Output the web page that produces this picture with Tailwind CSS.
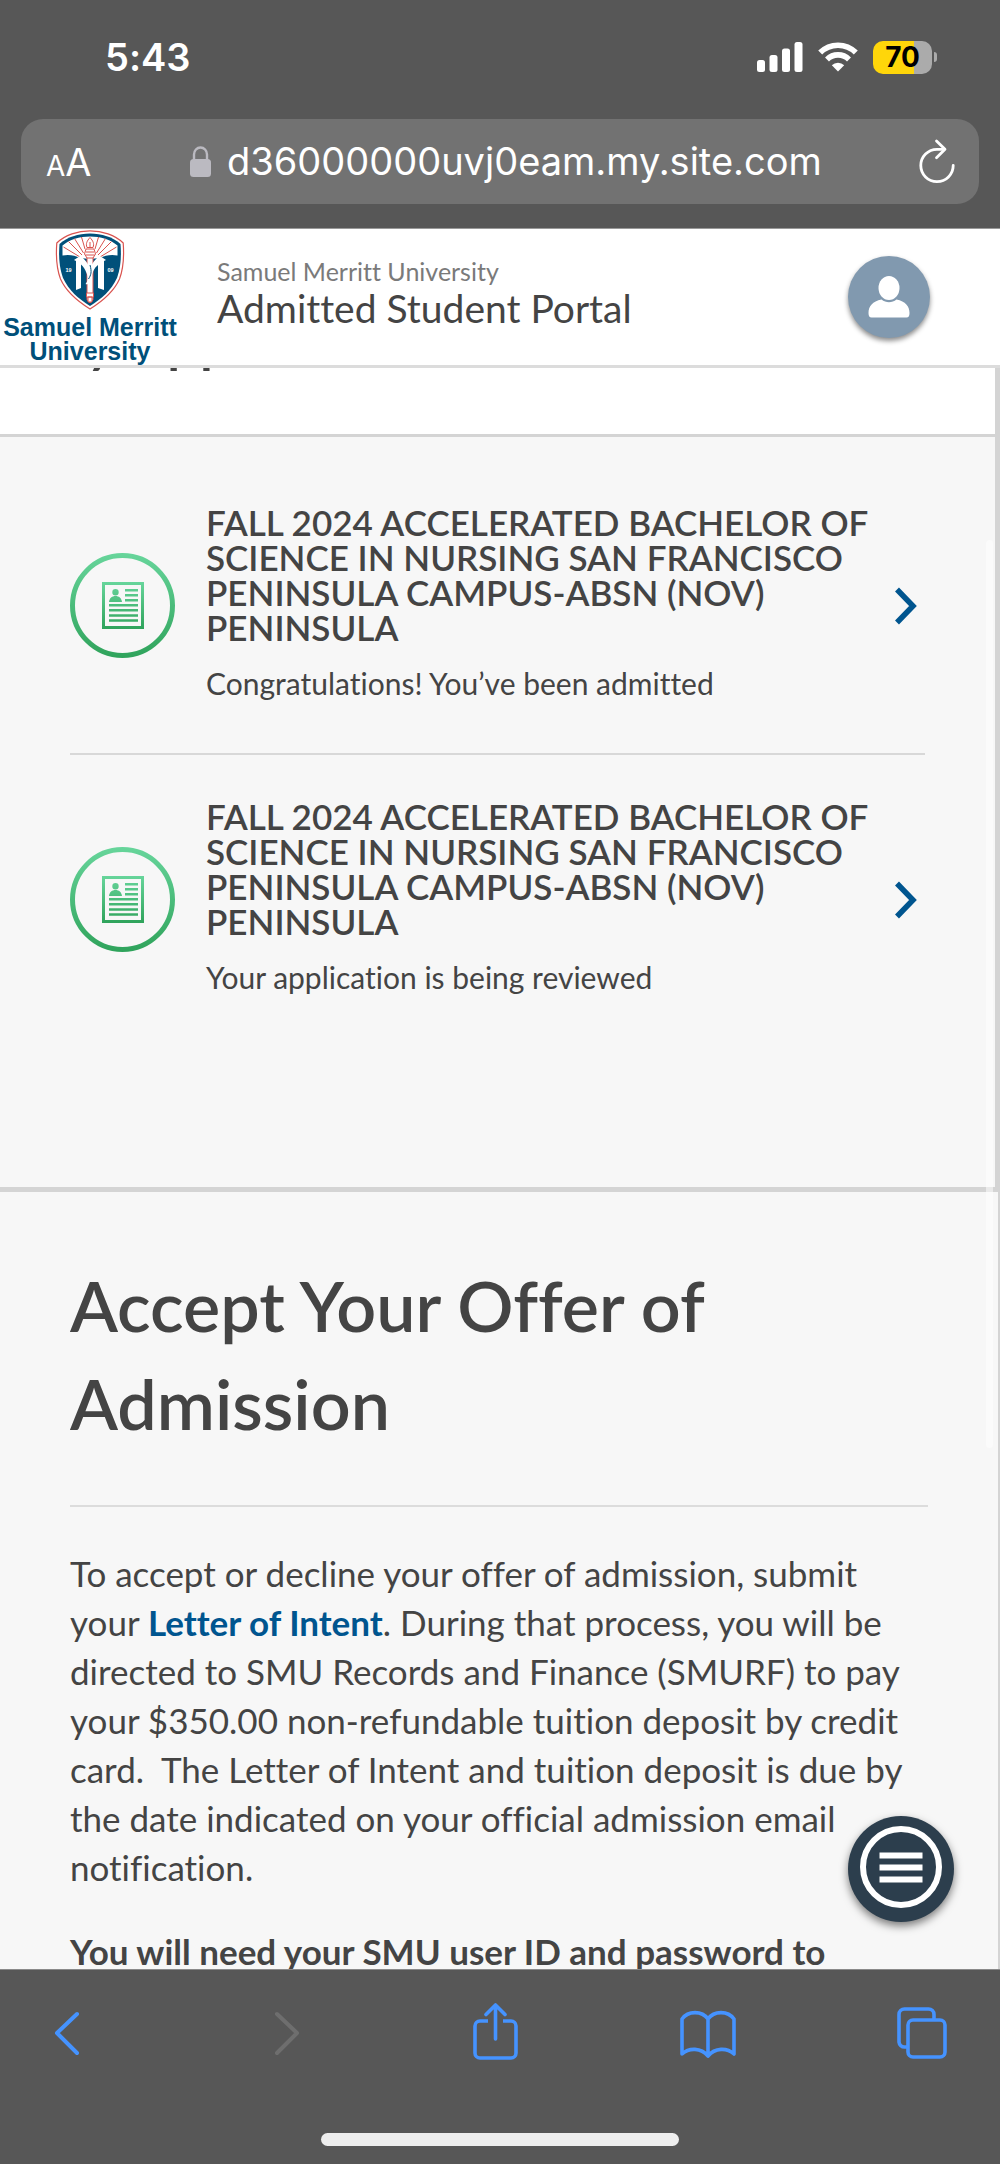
<!DOCTYPE html>
<html lang="en">
<head>
<meta charset="utf-8">
<meta name="viewport" content="width=device-width, initial-scale=1">
<title>Admitted Student Portal</title>
<script src="https://cdn.jsdelivr.net/npm/@tailwindcss/browser@4"></script>
</head>
<body class="flex h-screen flex-col overflow-hidden bg-[#f7f7f7] font-['Lato',sans-serif] text-[#444] [font-variant-ligatures:none]">

<!-- Browser chrome: status row and address bar -->
<div class="shrink-0 border-b border-[#999] bg-[#575757] px-[21px] pb-6 font-['Inter',sans-serif] text-white">
  <div class="mb-[5px] flex h-[114px] items-center justify-between pr-[42px] pl-[84px]">
    <span class="text-[38px] font-semibold">5:43</span>
    <div class="flex items-center gap-[15px]">
      <svg class="h-[30px] w-[46px]" viewBox="0 0 46 30" fill="#fff" aria-label="Signal"><rect x="0" y="18" width="8" height="12" rx="2.500"/><rect x="12.500" y="13" width="8" height="17" rx="2.500"/><rect x="25" y="6.500" width="8" height="23.500" rx="2.500"/><rect x="37.500" y="0" width="8" height="30" rx="2.500"/></svg>
      <svg class="h-[30px] w-10" viewBox="0 0 40 30" fill="none" stroke="#fff" stroke-width="5.600" aria-label="Wi-Fi"><path d="M2.200 10.600a25.200 25.200 0 0 1 35.600 0"/><path d="M9 17.400a15.600 15.600 0 0 1 22 0"/><path d="M20 29.500l-6.200-6.300a8.800 8.800 0 0 1 12.400 0z" fill="#fff" stroke="none"/></svg>
      <div class="flex items-center gap-0.5">
        <span class="flex h-[33px] w-[59px] items-center justify-center rounded-[10px] bg-linear-to-r from-[#ffd60a] from-70% to-[#ababab] to-70% text-[28px] leading-none font-bold text-black">70</span>
        <span class="h-2.5 w-[3px] rounded-r-full bg-[#ababab]"></span>
      </div>
    </div>
  </div>
  <div class="flex h-[85px] items-center rounded-[22px] bg-[#727272] pr-6 pl-[25px]">
    <button type="button" aria-label="Page settings" class="flex w-[144px] items-baseline leading-none"><span class="text-[28px]">A</span><span class="text-[38px]">A</span></button>
    <svg class="h-[31px] w-[21px] shrink-0" viewBox="0 0 21 31" aria-hidden="true"><path d="M4 15V8.500a6.500 7 0 0 1 13 0V15" fill="none" stroke="#bbbac1" stroke-width="2.400"/><rect y="13" width="21" height="18" rx="3.500" fill="#bbbac1"/></svg>
    <input type="text" aria-label="Address" value="d36000000uvj0eam.my.site.com" class="ml-4 min-w-0 flex-1 bg-transparent text-[38px] outline-none">
    <button type="button" aria-label="Reload">
      <svg class="h-[46px] w-9" viewBox="0 0 36 46" fill="none" stroke="#fff" stroke-width="2.800" stroke-linecap="round" stroke-linejoin="round"><path d="M34.200 26.500A16.200 16.200 0 1 1 18 10.300h7"/><path d="M17.500 2l8.500 8.300-8.500 8.500"/></svg>
    </button>
  </div>
</div>

<!-- Site header -->
<header class="flex shrink-0 items-start border-b-[3px] border-[#dcdcdc] bg-white">
  <a href="#" class="flex h-[136px] w-[180px] shrink-0 flex-col items-center pt-px font-['Liberation_Sans',sans-serif] text-[25px] leading-6 font-bold text-[#00507a]">
    <svg class="mb-[5px] h-20 w-[70px] shrink-0" viewBox="0 0 70 80" aria-hidden="true">
      <path d="M35 .8C47 .8 60 5 68.200 13c.9 12 .8 24-3.700 36C58.500 62.500 47 71.500 35 79 23 71.500 11.500 62.500 5.500 49 1 37 .9 25 1.800 13 10 5 23 .8 35 .8z" fill="#fff" stroke="#d9534f" stroke-width="1.200"/>
      <path d="M35 3.500C46.500 3.500 58 7 65.500 14c.9 11 .6 23-3.500 34C56.500 60 46.500 69 35 76 23.500 69 13.500 60 8 48 3.900 37 3.600 25 4.500 14 12 7 23.500 3.500 35 3.500z" fill="#00507a"/>
      <path d="M35 6.500C45.500 6.500 55.500 9.500 62.500 15.500v10C56 24 50 25.500 45 28l-10 1-10-1C20 25.500 14 24 7.500 25.500v-10C14.500 9.500 24.500 6.500 35 6.500z" fill="#fff"/>
      <path d="M25 27L8.500 17M27 25L13.500 11.500M28.500 23L19.500 8.500M30 19L26.500 7M45 27L61.500 17M43 25L56.500 11.500M41.500 23L50.500 8.500M40 19L43.500 7" stroke="#d9534f" fill="none"/>
      <path d="M32 27h6v43l-3 3-3-3z" fill="#fff" stroke="#d9534f"/>
      <path d="M21 60V31l-2-1 6-4c4 2 8 7 10 13 2-6 6-11 10-13l6 4-2 1v29l-6-2V35c-4 3-6 8-6.500 12.500C36 53 33 55 30.500 54c3-3 2.500-8 1-11-1.300-3.500-3-6.500-5.500-8.500V58z" fill="#fff"/>
      <path d="M31 19h8l1.500 5-2.500 4h-6l-2.500-4zM31 22h8M30.500 25h9M35 7.500c-3 3.500-4.500 6-3 10h6c1.500-4 0-6.500-3-10zM35 12v6M31.500 63h7v4h-7zM33 67h4v5h-4z" fill="#fff" stroke="#d9534f"/>
      <path d="M35 35c2 7 1 10-1.500 14" stroke="#00507a" fill="none"/>
      <g fill="#fff" font-family="Liberation Sans, sans-serif" font-size="5.500" font-weight="700"><text x="10.500" y="41.500">19</text><text x="52.500" y="41.500">09</text></g>
    </svg>
    <span>Samuel Merritt</span>
    <span>University</span>
  </a>
  <div class="ml-[37px] min-w-0 flex-1 pt-[27px]">
    <p class="text-[25px] leading-[30px] text-[#7a7a7a]">Samuel Merritt University</p>
    <h1 class="text-[39px] leading-[44px]">Admitted Student Portal</h1>
  </div>
  <button type="button" aria-label="Account" class="mt-[27px] mr-[70px] flex size-[82px] shrink-0 rounded-full bg-[#8199af] shadow-[0_3px_5px_rgba(0,0,0,0.45)]">
    <svg class="size-full" viewBox="0 0 82 82" fill="#fff"><ellipse cx="41" cy="32" rx="10.500" ry="12"/><path d="M20.500 57c0-7 4-11.500 13-13.500 4.500 3.700 10.500 3.700 15 0 9 2 13 6.500 13 13.500 0 3-1 4.500-3 4.500h-35c-2 0-3-1.500-3-4.500z"/></svg>
  </button>
</header>

<!-- Scrolled page content -->
<div class="relative flex min-h-0 flex-1 flex-col">
  <main class="min-h-0 flex-1 overflow-hidden">
    <div class="border-r-[5px] border-[#d4d4d4]">
      <div class="border-b-[3px] border-[#d4d4d4] bg-white px-8 pb-[66px]">
        <h2 class="-mt-[58px] text-[58px] leading-none font-semibold">My Applications</h2>
      </div>
      <ul class="flex flex-col border-b-[5px] border-[#d4d4d4] px-[70px] pt-6 pb-[140px]">
        <li class="border-b-2 border-[#d8d8d8]">
          <a href="#" class="flex items-center pt-11 pb-[47px]">
            <svg class="size-[105px] shrink-0" viewBox="0 0 105 105" fill="none" aria-hidden="true">
              <defs><linearGradient id="green" x1="0" y1="0" x2="0" y2="105" gradientUnits="userSpaceOnUse"><stop stop-color="#67d59b"/><stop offset="1" stop-color="#2fa35b"/></linearGradient>
              <linearGradient id="sheet" x1="0" y1="29" x2="0" y2="76" gradientUnits="userSpaceOnUse"><stop stop-color="#67d59b"/><stop offset="1" stop-color="#2fa35b"/></linearGradient></defs>
              <g id="badge"><circle cx="52.500" cy="52.500" r="50" stroke="url(#green)" stroke-width="5"/>
              <path fill="url(#sheet)" fill-rule="evenodd" d="M32 29h42v47H32zM35 32v41h36V32zM55 36h13v2.500H55zM55 41h13v2.500H55zM55 46h13v2.500H55zM39 51h29v2.500H39zM39 56h29v2.500H39zM39 61.300h29v2.500H39zM39 66.300h29v2.500H39zM45.500 36a3.200 3.200 0 1 1 0 6.400 3.200 3.200 0 0 1 0-6.400zM39 49c.5-4 3-6 6.500-6s6 2 6.500 6z"/></g>
            </svg>
            <div class="ml-[31px] min-w-0 flex-1">
              <h3 class="text-[35px] leading-[35px] font-semibold">FALL 2024 ACCELERATED BACHELOR OF<br>SCIENCE IN NURSING SAN FRANCISCO<br>PENINSULA CAMPUS-ABSN (NOV)<br>PENINSULA</h3>
              <p class="mt-[15px] text-[30px] leading-[46px]">Congratulations! You’ve been admitted</p>
            </div>
            <svg class="mr-[7px] h-[38px] w-6 shrink-0" viewBox="0 0 24 38" fill="none" stroke="#00558f" stroke-width="5.500" aria-hidden="true"><path d="M3 2.500l16 16.500L3 35.500"/></svg>
          </a>
        </li>
        <li>
          <a href="#" class="flex items-center pt-11 pb-[47px]">
            <svg class="size-[105px] shrink-0" viewBox="0 0 105 105" fill="none" aria-hidden="true"><use href="#badge"/></svg>
            <div class="ml-[31px] min-w-0 flex-1">
              <h3 class="text-[35px] leading-[35px] font-semibold">FALL 2024 ACCELERATED BACHELOR OF<br>SCIENCE IN NURSING SAN FRANCISCO<br>PENINSULA CAMPUS-ABSN (NOV)<br>PENINSULA</h3>
              <p class="mt-[15px] text-[30px] leading-[46px]">Your application is being reviewed</p>
            </div>
            <svg class="mr-[7px] h-[38px] w-6 shrink-0" viewBox="0 0 24 38" fill="none" stroke="#00558f" stroke-width="5.500" aria-hidden="true"><path d="M3 2.500l16 16.500L3 35.500"/></svg>
          </a>
        </li>
      </ul>
    </div>
    <section class="border-r-2 border-[#d4d4d4] px-[70px] pt-16">
      <h2 class="text-[70px] leading-[98px] font-semibold">Accept Your Offer of<br>Admission</h2>
      <hr class="mt-[53px] border-t-2 border-[#dcdcdc]">
      <p class="mt-[42px] text-[35px] leading-[49px]">To accept or decline your offer of admission, submit<br>your <a href="#" class="font-bold text-[#00558f]">Letter of Intent</a>. During that process, you will be<br>directed to SMU Records and Finance (SMURF) to pay<br>your $350.00 non-refundable tuition deposit by credit<br>card.&nbsp; The Letter of Intent and tuition deposit is due by<br>the date indicated on your official admission email<br>notification.</p>
      <p class="mt-[35px] text-[35px] leading-[49px] font-bold">You will need your SMU user ID and password to</p>
    </section>
  </main>
  <div class="absolute top-[172px] right-[7px] bottom-[521px] w-[7px] rounded-full bg-white/50"></div>
  <button type="button" aria-label="Menu" class="absolute right-[46px] bottom-[47px] size-[106px] rounded-full bg-[#2c3e4d] shadow-[0_4px_8px_rgba(0,0,0,0.5)]">
    <svg class="size-full" viewBox="0 0 106 106" fill="none" stroke="#fff" stroke-width="6"><circle cx="53" cy="51" r="38"/><path d="M31.500 39.500h43M31.500 51.500h43M31.500 63.500h43"/></svg>
  </button>
</div>

<!-- Browser toolbar -->
<nav aria-label="Browser" class="flex shrink-0 flex-col items-center border-t border-[#8a8a8a] bg-[#575757] pb-[18px]">
  <div class="flex w-full items-center justify-between pt-8 pr-[51px] pb-[69px] pl-[39px]">
    <button type="button" aria-label="Back"><svg class="h-[62px] w-14" viewBox="0 0 56 62" fill="none" stroke="#4593ff" stroke-width="4" stroke-linecap="round" stroke-linejoin="round"><path d="M38 12L18 31l20 20"/></svg></button>
    <button type="button" aria-label="Forward" disabled><svg class="h-[62px] w-14" viewBox="0 0 56 62" fill="none" stroke="#6e6e6e" stroke-width="4" stroke-linecap="round" stroke-linejoin="round"><path d="M24 12l20 19-20 20"/></svg></button>
    <button type="button" aria-label="Share"><svg class="h-[62px] w-14" viewBox="0 0 56 62" fill="none" stroke="#4593ff" stroke-width="3.600" stroke-linecap="round" stroke-linejoin="round"><path d="M22 19h-8a5 5 0 0 0-5 5v27a5 5 0 0 0 5 5h31a5 5 0 0 0 5-5V24a5 5 0 0 0-5-5h-8" stroke-linecap="butt"/><path d="M29.500 37V4M20 12.500L29.500 3l9.500 9.500"/></svg></button>
    <button type="button" aria-label="Bookmarks"><svg class="h-[62px] w-14" viewBox="0 0 56 62" fill="none" stroke="#4593ff" stroke-width="3.600" stroke-linecap="round" stroke-linejoin="round"><path d="M28 54V17C22 8.500 8 8.500 2 17v35c7-6.500 19-6.500 26 2 7-8.500 19-8.500 26-2V17C48 8.500 34 8.500 28 17"/></svg></button>
    <button type="button" aria-label="Tabs"><svg class="h-[62px] w-14" viewBox="0 0 56 62" fill="none" stroke="#4593ff" stroke-width="3.600"><rect x="15" y="18" width="37" height="37" rx="5"/><path d="M15 45h-3.500a5.500 5.500 0 0 1-5.500-5V12.500A5.500 5.500 0 0 1 11.500 7h24a5.500 5.500 0 0 1 5.500 5.500V18"/></svg></button>
  </div>
  <div class="h-[13px] w-[358px] rounded-full bg-[#eee]"></div>
</nav>
</body>
</html>
